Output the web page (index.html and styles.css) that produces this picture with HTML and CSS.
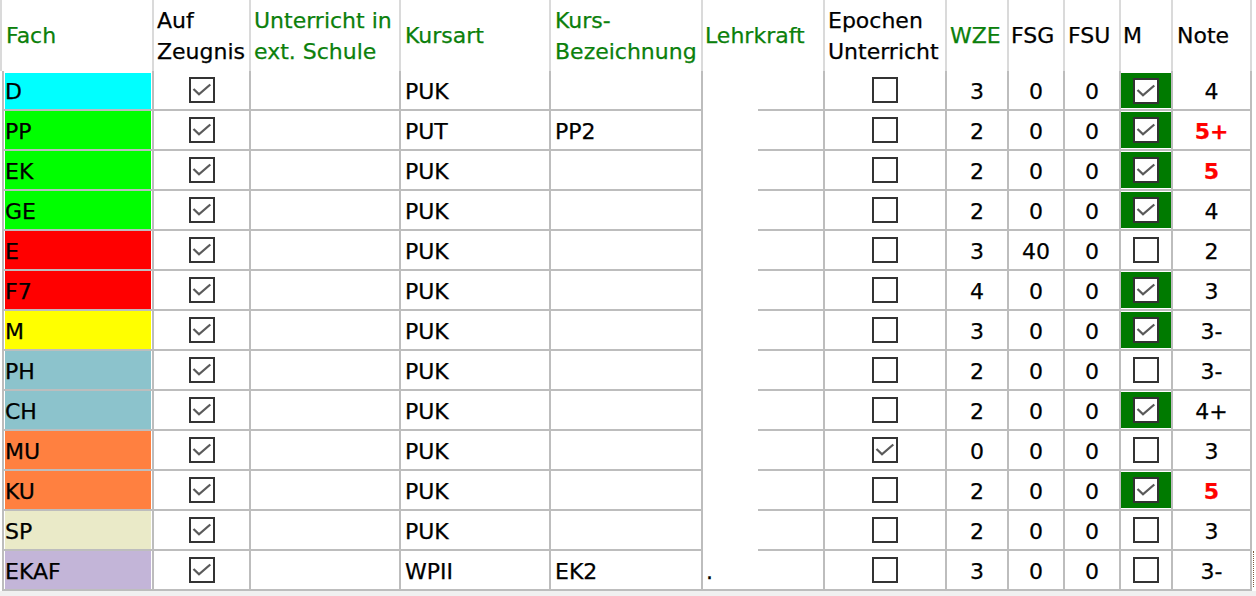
FILE: index.html
```html
<!DOCTYPE html>
<html lang="de">
<head>
<meta charset="utf-8">
<title>Fächer</title>
<link rel="stylesheet" href="styles.css">
</head>
<body>
<svg class="defs" width="0" height="0" aria-hidden="true">
  <symbol id="cb-off" viewBox="0 0 26 26"><rect x="1" y="1" width="24" height="24" fill="#fff" stroke="#333" stroke-width="2"/></symbol>
  <symbol id="cb-on" viewBox="0 0 26 26"><rect x="1" y="1" width="24" height="24" fill="#fff" stroke="#333" stroke-width="2"/><path d="M4.5 12 L10 17.3 L21.3 7.5" fill="none" stroke="#5a5a5a" stroke-width="2.3"/></symbol>
</svg>
<div class="grid">
  <div class="row head">
    <div class="c w-fach g">Fach</div>
    <div class="c w-auf">Auf<br>Zeugnis</div>
    <div class="c w-ext g">Unterricht in<br>ext. Schule</div>
    <div class="c w-art g">Kursart</div>
    <div class="c w-bez g">Kurs-<br>Bezeichnung</div>
    <div class="c w-lk g">Lehrkraft</div>
    <div class="c w-ep">Epochen<br>Unterricht</div>
    <div class="c w-wze g">WZE</div>
    <div class="c w-fsg">FSG</div>
    <div class="c w-fsu">FSU</div>
    <div class="c w-m">M</div>
    <div class="c w-note">Note</div>
  </div>

  <div class="row first">
    <div class="c w-fach"><span class="chip cy">D</span></div>
    <div class="c w-auf ctr"><svg class="cb"><use href="#cb-on"/></svg></div>
    <div class="c w-ext"></div>
    <div class="c w-art t">PUK</div>
    <div class="c w-bez t"></div>
    <div class="c w-lk gap"><span class="rule"></span></div>
    <div class="c w-ep ctr"><svg class="cb"><use href="#cb-off"/></svg></div>
    <div class="c w-wze n">3</div>
    <div class="c w-fsg n">0</div>
    <div class="c w-fsu n">0</div>
    <div class="c w-m"><span class="mk on"><svg class="cb"><use href="#cb-on"/></svg></span></div>
    <div class="c w-note n">4</div>
  </div>

  <div class="row">
    <div class="c w-fach"><span class="chip gr">PP</span></div>
    <div class="c w-auf ctr"><svg class="cb"><use href="#cb-on"/></svg></div>
    <div class="c w-ext"></div>
    <div class="c w-art t">PUT</div>
    <div class="c w-bez t">PP2</div>
    <div class="c w-lk gap"><span class="rule"></span></div>
    <div class="c w-ep ctr"><svg class="cb"><use href="#cb-off"/></svg></div>
    <div class="c w-wze n">2</div>
    <div class="c w-fsg n">0</div>
    <div class="c w-fsu n">0</div>
    <div class="c w-m"><span class="mk on"><svg class="cb"><use href="#cb-on"/></svg></span></div>
    <div class="c w-note n bad">5+</div>
  </div>

  <div class="row">
    <div class="c w-fach"><span class="chip gr">EK</span></div>
    <div class="c w-auf ctr"><svg class="cb"><use href="#cb-on"/></svg></div>
    <div class="c w-ext"></div>
    <div class="c w-art t">PUK</div>
    <div class="c w-bez t"></div>
    <div class="c w-lk gap"><span class="rule"></span></div>
    <div class="c w-ep ctr"><svg class="cb"><use href="#cb-off"/></svg></div>
    <div class="c w-wze n">2</div>
    <div class="c w-fsg n">0</div>
    <div class="c w-fsu n">0</div>
    <div class="c w-m"><span class="mk on"><svg class="cb"><use href="#cb-on"/></svg></span></div>
    <div class="c w-note n bad">5</div>
  </div>

  <div class="row">
    <div class="c w-fach"><span class="chip gr">GE</span></div>
    <div class="c w-auf ctr"><svg class="cb"><use href="#cb-on"/></svg></div>
    <div class="c w-ext"></div>
    <div class="c w-art t">PUK</div>
    <div class="c w-bez t"></div>
    <div class="c w-lk gap"><span class="rule"></span></div>
    <div class="c w-ep ctr"><svg class="cb"><use href="#cb-off"/></svg></div>
    <div class="c w-wze n">2</div>
    <div class="c w-fsg n">0</div>
    <div class="c w-fsu n">0</div>
    <div class="c w-m"><span class="mk on"><svg class="cb"><use href="#cb-on"/></svg></span></div>
    <div class="c w-note n">4</div>
  </div>

  <div class="row">
    <div class="c w-fach"><span class="chip rd">E</span></div>
    <div class="c w-auf ctr"><svg class="cb"><use href="#cb-on"/></svg></div>
    <div class="c w-ext"></div>
    <div class="c w-art t">PUK</div>
    <div class="c w-bez t"></div>
    <div class="c w-lk gap"><span class="rule"></span></div>
    <div class="c w-ep ctr"><svg class="cb"><use href="#cb-off"/></svg></div>
    <div class="c w-wze n">3</div>
    <div class="c w-fsg n">40</div>
    <div class="c w-fsu n">0</div>
    <div class="c w-m"><span class="mk"><svg class="cb"><use href="#cb-off"/></svg></span></div>
    <div class="c w-note n">2</div>
  </div>

  <div class="row">
    <div class="c w-fach"><span class="chip rd">F7</span></div>
    <div class="c w-auf ctr"><svg class="cb"><use href="#cb-on"/></svg></div>
    <div class="c w-ext"></div>
    <div class="c w-art t">PUK</div>
    <div class="c w-bez t"></div>
    <div class="c w-lk gap"><span class="rule"></span></div>
    <div class="c w-ep ctr"><svg class="cb"><use href="#cb-off"/></svg></div>
    <div class="c w-wze n">4</div>
    <div class="c w-fsg n">0</div>
    <div class="c w-fsu n">0</div>
    <div class="c w-m"><span class="mk on"><svg class="cb"><use href="#cb-on"/></svg></span></div>
    <div class="c w-note n">3</div>
  </div>

  <div class="row">
    <div class="c w-fach"><span class="chip ye">M</span></div>
    <div class="c w-auf ctr"><svg class="cb"><use href="#cb-on"/></svg></div>
    <div class="c w-ext"></div>
    <div class="c w-art t">PUK</div>
    <div class="c w-bez t"></div>
    <div class="c w-lk gap"><span class="rule"></span></div>
    <div class="c w-ep ctr"><svg class="cb"><use href="#cb-off"/></svg></div>
    <div class="c w-wze n">3</div>
    <div class="c w-fsg n">0</div>
    <div class="c w-fsu n">0</div>
    <div class="c w-m"><span class="mk on"><svg class="cb"><use href="#cb-on"/></svg></span></div>
    <div class="c w-note n">3-</div>
  </div>

  <div class="row">
    <div class="c w-fach"><span class="chip tl">PH</span></div>
    <div class="c w-auf ctr"><svg class="cb"><use href="#cb-on"/></svg></div>
    <div class="c w-ext"></div>
    <div class="c w-art t">PUK</div>
    <div class="c w-bez t"></div>
    <div class="c w-lk gap"><span class="rule"></span></div>
    <div class="c w-ep ctr"><svg class="cb"><use href="#cb-off"/></svg></div>
    <div class="c w-wze n">2</div>
    <div class="c w-fsg n">0</div>
    <div class="c w-fsu n">0</div>
    <div class="c w-m"><span class="mk"><svg class="cb"><use href="#cb-off"/></svg></span></div>
    <div class="c w-note n">3-</div>
  </div>

  <div class="row">
    <div class="c w-fach"><span class="chip tl">CH</span></div>
    <div class="c w-auf ctr"><svg class="cb"><use href="#cb-on"/></svg></div>
    <div class="c w-ext"></div>
    <div class="c w-art t">PUK</div>
    <div class="c w-bez t"></div>
    <div class="c w-lk gap"><span class="rule"></span></div>
    <div class="c w-ep ctr"><svg class="cb"><use href="#cb-off"/></svg></div>
    <div class="c w-wze n">2</div>
    <div class="c w-fsg n">0</div>
    <div class="c w-fsu n">0</div>
    <div class="c w-m"><span class="mk on"><svg class="cb"><use href="#cb-on"/></svg></span></div>
    <div class="c w-note n">4+</div>
  </div>

  <div class="row">
    <div class="c w-fach"><span class="chip or">MU</span></div>
    <div class="c w-auf ctr"><svg class="cb"><use href="#cb-on"/></svg></div>
    <div class="c w-ext"></div>
    <div class="c w-art t">PUK</div>
    <div class="c w-bez t"></div>
    <div class="c w-lk gap"><span class="rule"></span></div>
    <div class="c w-ep ctr"><svg class="cb"><use href="#cb-on"/></svg></div>
    <div class="c w-wze n">0</div>
    <div class="c w-fsg n">0</div>
    <div class="c w-fsu n">0</div>
    <div class="c w-m"><span class="mk"><svg class="cb"><use href="#cb-off"/></svg></span></div>
    <div class="c w-note n">3</div>
  </div>

  <div class="row">
    <div class="c w-fach"><span class="chip or">KU</span></div>
    <div class="c w-auf ctr"><svg class="cb"><use href="#cb-on"/></svg></div>
    <div class="c w-ext"></div>
    <div class="c w-art t">PUK</div>
    <div class="c w-bez t"></div>
    <div class="c w-lk gap"><span class="rule"></span></div>
    <div class="c w-ep ctr"><svg class="cb"><use href="#cb-off"/></svg></div>
    <div class="c w-wze n">2</div>
    <div class="c w-fsg n">0</div>
    <div class="c w-fsu n">0</div>
    <div class="c w-m"><span class="mk on"><svg class="cb"><use href="#cb-on"/></svg></span></div>
    <div class="c w-note n bad">5</div>
  </div>

  <div class="row">
    <div class="c w-fach"><span class="chip be">SP</span></div>
    <div class="c w-auf ctr"><svg class="cb"><use href="#cb-on"/></svg></div>
    <div class="c w-ext"></div>
    <div class="c w-art t">PUK</div>
    <div class="c w-bez t"></div>
    <div class="c w-lk gap"><span class="rule"></span></div>
    <div class="c w-ep ctr"><svg class="cb"><use href="#cb-off"/></svg></div>
    <div class="c w-wze n">2</div>
    <div class="c w-fsg n">0</div>
    <div class="c w-fsu n">0</div>
    <div class="c w-m"><span class="mk"><svg class="cb"><use href="#cb-off"/></svg></span></div>
    <div class="c w-note n">3</div>
  </div>

  <div class="row last">
    <div class="c w-fach"><span class="chip lv">EKAF</span></div>
    <div class="c w-auf ctr"><svg class="cb"><use href="#cb-on"/></svg></div>
    <div class="c w-ext"></div>
    <div class="c w-art t">WPII</div>
    <div class="c w-bez t">EK2</div>
    <div class="c w-lk t dot">.</div>
    <div class="c w-ep ctr"><svg class="cb"><use href="#cb-off"/></svg></div>
    <div class="c w-wze n">3</div>
    <div class="c w-fsg n">0</div>
    <div class="c w-fsu n">0</div>
    <div class="c w-m"><span class="mk"><svg class="cb"><use href="#cb-off"/></svg></span></div>
    <div class="c w-note n">3-</div>
    <div class="focus"></div>
  </div>
</div>
</body>
</html>
```
FILE: styles.css
```css
html, body {
  margin: 0;
  padding: 0;
}
body {
  background: #f0f0f0;
  font-family: "DejaVu Sans", "Liberation Sans", sans-serif;
  font-size: 22px;
  color: #000;
}
.defs {
  position: absolute;
  width: 0;
  height: 0;
  overflow: hidden;
}
.grid {
  width: 1256px;
  height: 591px;
  background: #fff;
  overflow: hidden;
}
.row {
  display: flex;
  margin-left: 2px;
  border-left: 2px solid #bdbdbd;
  height: 40px;
}
.c {
  box-sizing: border-box;
  flex: none;
  height: 40px;
  border-right: 2px solid #bdbdbd;
  border-bottom: 2px solid #bdbdbd;
  white-space: nowrap;
  overflow: hidden;
  -webkit-text-stroke: 0.25px currentColor;
}

/* column widths (including the 2px right rule) */
.w-fach { width: 150px; }
.w-auf  { width: 97px; }
.w-ext  { width: 150px; }
.w-art  { width: 150px; }
.w-bez  { width: 152px; }
.w-lk   { width: 122px; }
.w-ep   { width: 122px; }
.w-wze  { width: 62px; }
.w-fsg  { width: 56px; }
.w-fsu  { width: 56px; }
.w-m    { width: 52px; }
.w-note { width: 79px; }

/* header */
.head {
  margin-left: 0;
  border-left: 2px solid #dadada;
  height: 71px;
}
.head .c {
  height: 71px;
  border-bottom: none;
  border-right-color: #dadada;
  display: flex;
  align-items: center;
  padding-left: 3px;
  line-height: 31px;
}
.head .w-fach { width: 152px; padding-left: 4px; }
.head .w-lk, .head .w-fsg, .head .w-m { padding-left: 2px; }
.head .w-art, .head .w-bez, .head .w-note { padding-left: 4px; }
.g { color: #0b800b; }

/* body cells */
.t, .n {
  line-height: 34px;
  padding-top: 4px;
}
.t { padding-left: 4px; }
.n { text-align: center; }
.bad { color: #ff0000; font-weight: bold; }
.ctr {
  display: flex;
  align-items: center;
  justify-content: center;
}
.cb {
  width: 26px;
  height: 26px;
  display: block;
}

/* Lehrkraft: the row rule starts 55px into the cell */
.gap {
  border-bottom: 0;
  display: flex;
  align-items: flex-end;
  justify-content: flex-end;
}
.rule {
  display: block;
  width: 65px;
  height: 2px;
  background: #bdbdbd;
}
.dot { padding-left: 3px; }

/* Fach colour chips */
.w-fach { display: flex; }
.chip {
  flex: 1;
  margin: 0 1px;
  line-height: 34px;
  padding-top: 4px;
  padding-left: 0;
}
.first .chip {
  margin-top: 2px;
  padding-top: 2px;
}
.cy { background: #00ffff; }
.gr { background: #00ff00; }
.rd { background: #ff0000; }
.ye { background: #ffff00; }
.tl { background: #8cc3cc; }
.or { background: #ff8040; }
.be { background: #eaeac8; }
.lv { background: #c3b5d8; }

/* M column */
.w-m { display: flex; }
.mk {
  flex: 1;
  margin: 1px 0;
  display: flex;
  align-items: center;
  justify-content: center;
}
.first .mk { margin-top: 2px; }
.mk.on { background: #007a00; }

/* focus rectangle edge on the last row */
.focus {
  flex: none;
  width: 0;
  height: 36px;
  margin-left: 1px;
  border-left: 1px dotted #7d5a3c;
}
```
